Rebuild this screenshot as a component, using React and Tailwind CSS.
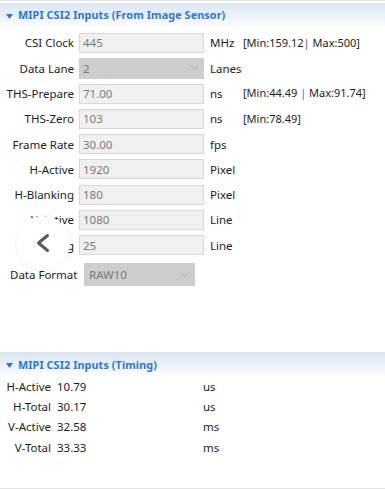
import React from "react";

const font = { fontFamily: '"Noto Sans", "Open Sans", sans-serif' };

function Header({ title }) {
  return (
    <div className="flex h-[24px] items-center gap-[5px] bg-gradient-to-b from-[#dce6f2] to-[#fbfcfe] pl-[6px] border-t border-[#e3e7ec]">
      <svg width="7" height="5" viewBox="0 0 7 5" className="mt-[1px]">
        <path d="M0 0 L7 0 L3.5 5 Z" fill="#2a77d4" />
      </svg>
      <span className="text-[10.8px] font-bold text-[#2a77d4] tracking-[0.1px]">{title}</span>
    </div>
  );
}

function Chevron() {
  return (
    <svg width="9" height="6" viewBox="0 0 9 6">
      <path d="M1 1 L4.5 4.5 L8 1" fill="none" stroke="#a8a8a8" strokeWidth="1" />
    </svg>
  );
}

function InputRow({ label, value, unit, range, select }) {
  return (
    <div className="flex h-[20px] items-center">
      <div className="w-[74px] pr-[5px] text-right text-[11.5px] text-[#1c1c1c] whitespace-nowrap">{label}</div>
      {select ? (
        <div className="flex h-[21px] w-[125px] items-center justify-between bg-[#cdcdcd] pl-[4px] pr-[5px] text-[11.5px] text-[#7a7a7a]">
          <span>{value}</span>
          <Chevron />
        </div>
      ) : (
        <div className="flex h-[20px] w-[125px] items-center border border-[#d8d8d8] bg-[#f0f0f0] pl-[3px] text-[11.5px] text-[#7a7a7a]">
          {value}
        </div>
      )}
      <div className="w-[39px] pl-[6px] text-[11.5px] text-[#1c1c1c]">{unit}</div>
      {range && <div className="text-[11px] text-[#1c1c1c] whitespace-nowrap">{range}</div>}
    </div>
  );
}

function TimingRow({ label, value, unit }) {
  return (
    <div className="flex h-[20.3px] items-center text-[11.5px] text-[#1c1c1c]">
      <div className="w-[51px] text-right whitespace-nowrap">{label}</div>
      <div className="w-[152px] pl-[6px]">{value}</div>
      <div>{unit}</div>
    </div>
  );
}

export default function App() {
  return (
    <div className="relative h-[489px] w-[385px] overflow-hidden bg-white" style={font}>
      <div className="h-[3px] border-t border-[#e6e6e6]" />
      <Header title="MIPI CSI2 Inputs (From Image Sensor)" />
      <div className="mt-[6px] flex flex-col gap-[5.3px] pl-[5px]">
        <InputRow label="CSI Clock" value="445" unit="MHz" range={<span>[Min:159.12<span className="text-[#555]">|</span> Max:500]</span>} />
        <InputRow label="Data Lane" value="2" unit="Lanes" select />
        <InputRow label="THS-Prepare" value="71.00" unit="ns" range={<span>[Min:44.49 <span className="text-[#6b52c8]">|</span> Max:91.74]</span>} />
        <InputRow label="THS-Zero" value="103" unit="ns" range="[Min:78.49]" />
        <InputRow label="Frame Rate" value="30.00" unit="fps" />
        <InputRow label="H-Active" value="1920" unit="Pixel" />
        <InputRow label="H-Blanking" value="180" unit="Pixel" />
        <InputRow label="V-Active" value="1080" unit="Line" />
        <InputRow label="V-Blanking" value="25" unit="Line" />
      </div>
      <div className="mt-[8px] flex h-[23px] items-center pl-[10px]">
        <div className="w-[74px] text-[11.5px] text-[#1c1c1c] whitespace-nowrap">Data Format</div>
        <div className="flex h-[23px] w-[111px] items-center justify-between bg-[#cdcdcd] pl-[5px] pr-[6px] text-[11.5px] text-[#7a7a7a]">
          <span>RAW10</span>
          <Chevron />
        </div>
      </div>
      <div className="h-[66px]" />
      <Header title="MIPI CSI2 Inputs (Timing)" />
      <div className="flex flex-col">
        <TimingRow label="H-Active" value="10.79" unit="us" />
        <TimingRow label="H-Total" value="30.17" unit="us" />
        <TimingRow label="V-Active" value="32.58" unit="ms" />
        <TimingRow label="V-Total" value="33.33" unit="ms" />
      </div>
      <div className="absolute bottom-0 left-0 h-[1px] w-full bg-[#e4e4e4]" />
      <div className="absolute left-[16px] top-[216px] flex h-[54px] w-[54px] items-center justify-center rounded-full bg-white shadow-[0_0_4px_rgba(0,0,0,0.08)]">
        <svg width="16" height="20" viewBox="0 0 16 20">
          <path d="M12.5 2.5 L3.5 10 L12.5 17.5" fill="none" stroke="#555a60" strokeWidth="3" strokeLinecap="round" strokeLinejoin="round" />
        </svg>
      </div>
    </div>
  );
}
